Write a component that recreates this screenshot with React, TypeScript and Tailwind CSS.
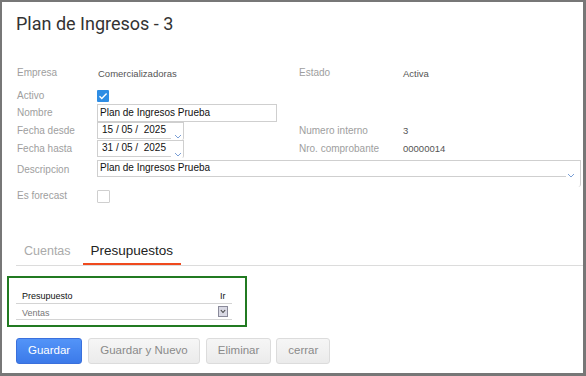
import React from 'react';

const Chevron = ({ className = '' }: { className?: string }) => (
  <svg width="8" height="5" viewBox="0 0 8 5" className={className}>
    <path d="M1 1l3 3 3-3" fill="none" stroke="#7a9fd6" strokeWidth="1" />
  </svg>
);

function Label({ children, w = 'w-[80px]' }: { children: React.ReactNode; w?: string }) {
  return <div className={`${w} shrink-0 text-[10px] leading-none text-[#9e9e9e]`}>{children}</div>;
}

function Value({ children }: { children: React.ReactNode }) {
  return <div className="text-[9.5px] leading-none text-[#555]">{children}</div>;
}

function DateInput({ value }: { value: string }) {
  return (
    <div className="relative h-[18px] w-[87px] border-t border-r border-[#cfcfcf] rounded-br-[2px]">
      <div className="h-[16px] w-[74px] border-l border-b border-[#cfcfcf] pl-[4px] text-[10px] leading-[14px] text-[#111] whitespace-pre">
        {value}
      </div>
      <Chevron className="absolute right-[1px] bottom-[1px]" />
    </div>
  );
}

export default function App() {
  return (
    <div
      className="w-[586px] h-[376px] bg-white border-[#777] border-t-2 border-l-2 border-r-[3px] border-b-[3px] overflow-hidden"
      style={{ fontFamily: '"Liberation Sans", Arial, sans-serif' }}
    >
      {/* Title */}
      <h1
        className="ml-[14px] mt-[10px] text-[18px] leading-[24px] text-[#333] font-normal"
        style={{ fontFamily: 'Roboto, sans-serif' }}
      >
        Plan de Ingresos - 3
      </h1>

      {/* Form */}
      <div className="ml-[15px] mt-[27px] flex flex-col">
        <div className="flex items-center h-[20px]">
          <Label>Empresa</Label>
          <div className="w-[202px] pl-[1px] pt-[2px]"><Value>Comercializadoras</Value></div>
          <Label w="w-[104px]">Estado</Label>
          <div className="pt-[2px]"><Value>Activa</Value></div>
        </div>

        <div className="flex items-center h-[16px] mt-[5px]">
          <Label>Activo</Label>
          <div className="w-[12px] h-[12px] bg-[#2f8de4] rounded-[1px] flex items-center justify-center">
            <svg width="10" height="10" viewBox="0 0 10 10">
              <path d="M1.5 5.2l2.3 2.3 4.8-5" fill="none" stroke="white" strokeWidth="1.4" />
            </svg>
          </div>
        </div>

        <div className="flex items-center h-[18px]">
          <Label>Nombre</Label>
          <div className="w-[180px] h-[18px] border border-[#cfcfcf] pl-[2px] text-[10px] leading-[16px] text-[#111]">
            Plan de Ingresos Prueba
          </div>
        </div>

        <div className="flex items-center h-[18px]">
          <Label>Fecha desde</Label>
          <div className="w-[202px]"><DateInput value="15 / 05 /  2025" /></div>
          <Label w="w-[104px]">Numero interno</Label>
          <Value>3</Value>
        </div>

        <div className="flex items-center h-[18px]">
          <Label>Fecha hasta</Label>
          <div className="w-[202px]"><DateInput value="31 / 05 /  2025" /></div>
          <Label w="w-[104px]">Nro. comprobante</Label>
          <Value>00000014</Value>
        </div>

        <div className="flex items-start mt-[2px] h-[28px]">
          <div className="pt-[5px]"><Label>Descripcion</Label></div>
          <div className="relative h-[27px] w-[484px] border-t border-r border-[#cfcfcf] rounded-br-[3px]">
            <div className="h-[16px] w-[469px] border-l border-b border-[#cfcfcf] pl-[2px] text-[10px] leading-[14px] text-[#111]">
              Plan de Ingresos Prueba
            </div>
            <Chevron className="absolute right-[5px] top-[12px]" />
          </div>
        </div>

        <div className="flex items-center h-[14px] mt-[1px]">
          <Label>Es forecast</Label>
          <div className="w-[13px] h-[13px] border border-[#cfcfcf] rounded-[1px]" />
        </div>
      </div>

      {/* Tabs */}
      <div className="ml-[14px] mt-[35px] flex gap-[4px] border-b border-[#dcdcdc]">
        <div className="px-[8px] h-[27px] pt-[4px] text-[12.5px] text-[#aaa]">Cuentas</div>
        <div className="px-[8px] h-[27px] pt-[3px] text-[13.5px] text-[#222] border-b-2 border-[#ef4a1e]">Presupuestos</div>
      </div>

      {/* Presupuestos table */}
      <div className="ml-[5px] mt-[10px] w-[240px] h-[51px] border-2 border-[#217a21] pt-[12px] pl-[7px]">
        <div className="w-[216px] text-[9px] text-[#111]">
          <div className="flex items-center h-[14px] border-b border-[#d4d4d4]">
            <div className="pl-[6px] w-[204px]">Presupuesto</div>
            <div>Ir</div>
          </div>
          <div className="flex items-center h-[16px] border-b border-[#d4d4d4]">
            <div className="pl-[6px] w-[202px] text-[#777] pt-[4px]">Ventas</div>
            <div className="w-[10px] h-[11px] border border-[#8a8a9a] bg-[#d9d9e4] flex items-center justify-center -mt-[1px]">
              <svg width="6" height="5" viewBox="0 0 6 5">
                <path d="M0.8 1l2.2 2.5 2.2-2.5" fill="none" stroke="#444" strokeWidth="1.1" />
              </svg>
            </div>
          </div>
        </div>
      </div>

      {/* Buttons */}
      <div className="ml-[14px] mt-[11px] flex gap-[6px]">
        <button className="h-[26px] px-[11px] rounded-[3px] border border-[#3a70dc] bg-gradient-to-b from-[#5394f8] to-[#3c7ae9] text-white text-[11.5px]">
          Guardar
        </button>
        <button className="h-[26px] px-[11px] rounded-[3px] border border-[#dcdcdc] bg-gradient-to-b from-[#f6f6f6] to-[#ebebeb] text-[#8a8a8a] text-[11.5px]">
          Guardar y Nuevo
        </button>
        <button className="h-[26px] px-[11px] rounded-[3px] border border-[#dcdcdc] bg-gradient-to-b from-[#f6f6f6] to-[#ebebeb] text-[#8a8a8a] text-[11.5px]">
          Eliminar
        </button>
        <button className="h-[26px] px-[11px] -ml-[1px] rounded-[3px] border border-[#dcdcdc] bg-gradient-to-b from-[#f6f6f6] to-[#ebebeb] text-[#8a8a8a] text-[11.5px]">
          cerrar
        </button>
      </div>
    </div>
  );
}
